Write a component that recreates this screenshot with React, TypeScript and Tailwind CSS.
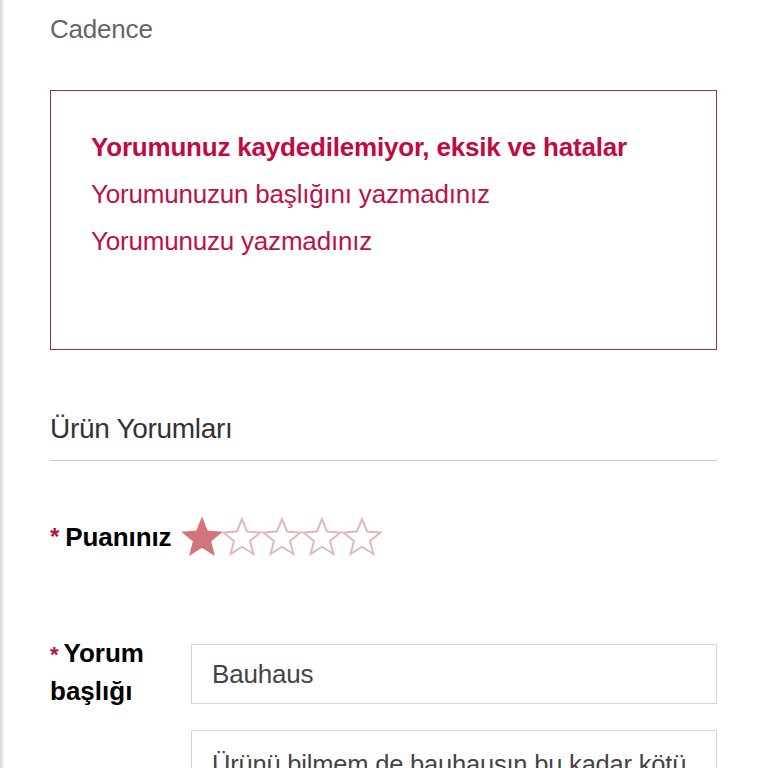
import { useState } from "react";

function Star({ filled }: { filled: boolean }) {
  return (
    <svg width="42" height="42" viewBox="0 0 24 24" className="-mr-[2px]">
      <path
        d="M12 1.8l2.9 7.1 7.6.5-5.9 4.9 1.9 7.4L12 17.6l-6.5 4.1 1.9-7.4-5.9-4.9 7.6-.5z"
        fill={filled ? "#d27579" : "#ffffff"}
        stroke={filled ? "#d27579" : "#e6b3b6"}
        strokeWidth="1.1"
        strokeLinejoin="miter"
      />
    </svg>
  );
}

export default function App() {
  const [rating] = useState(1);

  return (
    <div className="relative min-h-[768px] h-[768px] overflow-hidden bg-white font-['Liberation_Sans',Arial,sans-serif]">
      {/* edge shadow of the panel */}
      <div className="absolute left-0 top-0 h-full w-[5px] bg-gradient-to-r from-[#d4d4d4] to-white" />

      <div className="pl-[50px] pr-[51px] pt-[15px]">
        <p className="text-[26px] leading-[28px] text-[#666666] tracking-[-0.2px]">Cadence</p>

        <div className="mt-[47px] h-[260px] border border-[#a3284f] px-[40px] pt-[41px]">
          <p className="text-[26px] leading-[30px] font-bold text-[#c20a42] tracking-[-0.2px]">
            Yorumunuz kaydedilemiyor, eksik ve hatalar
          </p>
          <p className="mt-[17px] text-[26px] leading-[30px] text-[#bd1149] tracking-[-0.2px]">
            Yorumunuzun başlığını yazmadınız
          </p>
          <p className="mt-[17px] text-[26px] leading-[30px] text-[#bd1149] tracking-[-0.2px]">
            Yorumunuzu yazmadınız
          </p>
        </div>

        <h2 className="mt-[62px] pb-[14px] text-[28px] leading-[34px] text-[#333333] border-b border-[#cccccc] tracking-[-0.3px]">
          Ürün Yorumları
        </h2>

        <div className="mt-[55px] flex items-center">
          <span className="text-[24px] font-bold text-[#c20a42] mr-[6px] leading-none">*</span>
          <span className="text-[26px] font-bold text-black leading-[30px] tracking-[-0.1px]">Puanınız</span>
          <div className="ml-[10px] flex items-center">
            {[1, 2, 3, 4, 5].map((i) => (
              <Star key={i} filled={i <= rating} />
            ))}
          </div>
        </div>

        <div className="mt-[86px] flex items-start">
          <div className="w-[141px] shrink-0 text-[26px] font-bold leading-[37px] text-black -mt-[9px]">
            <span className="text-[#c20a42] text-[22px] mr-[5px]">*</span>Yorum
            <br />
            başlığı
          </div>
          <div className="flex-1 flex flex-col gap-[26px]">
            <div className="h-[60px] border border-[#d6d6d6] px-[20px] flex items-center text-[26px] text-[#444444] tracking-[-0.2px]">
              Bauhaus
            </div>
            <div className="h-[120px] border border-[#d6d6d6] px-[20px] pt-[14px] text-[25.5px] text-[#444444] whitespace-nowrap overflow-hidden tracking-[-0.2px]">
              Ürünü bilmem de bauhausın bu kadar kötü
            </div>
          </div>
        </div>
      </div>
    </div>
  );
}
